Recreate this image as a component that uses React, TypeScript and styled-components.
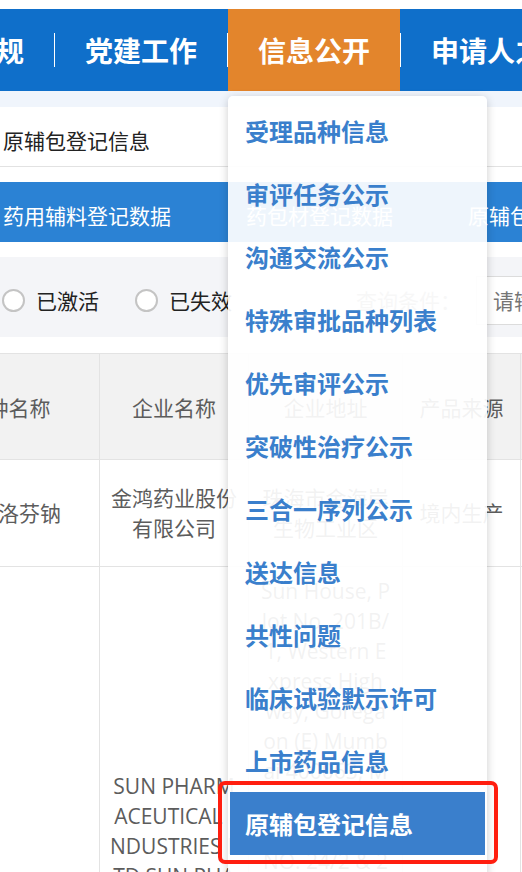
import React from "react"
import styled, { createGlobalStyle, css } from "styled-components"

const GlobalStyle = createGlobalStyle`
  html, body {
    margin: 0;
    padding: 0;
    background: #fff;
  }
  body {
    font-family: "Open Sans", "Noto Sans CJK SC", sans-serif;
    overflow: hidden;
  }
  * {
    box-sizing: border-box;
  }
`

const navItems = ["政策法规", "党建工作", "信息公开", "申请人之窗", "专题专栏"]

const menuItems = [
  "受理品种信息",
  "审评任务公示",
  "沟通交流公示",
  "特殊审批品种列表",
  "优先审评公示",
  "突破性治疗公示",
  "三合一序列公示",
  "送达信息",
  "共性问题",
  "临床试验默示许可",
  "上市药品信息",
  "原辅包登记信息",
]

const tabs = ["药用辅料登记数据", "药包材登记数据", "原辅包登记数据"]

// long cell text, broken the way the table shows it
const companyLines = [
  "SUN PHARM",
  "ACEUTICAL I",
  "NDUSTRIES L",
  "TD SUN PHA",
  "RMACEUTIC",
  "AL INDUSTRI",
  "ES LTD (HAL",
  "OL UNIT)",
  "LIMITED",
]
const addressLines = [
  "Sun House, P",
  "lot No. 201B/",
  "1, Western E",
  "xpress High",
  "way, Gorega",
  "on (E) Mumb",
  "ai 400063, M",
  "aharashtra, I",
  "NDIA;PLOT",
  "NO. 24/2 & 2",
  "5, GIDC, PH",
  "ASE-IV, PAN",
  "OLI, DIST. V",
  "ADODARA-39",
  "1 350, GUJA",
  "RAT, INDIA;",
  "SURVEY NO.",
  "259/15, DAD",
  "RA, SILVASS",
  "A, DADRA &",
  "NAGAR HAV",
  "ELI, INDIA",
]

export default function App() {
  return (
    <>
      <GlobalStyle />
      <Page>
        <Nav>
          {navItems.map((item, i) => (
            <React.Fragment key={item}>
              <NavItem $active={item === "信息公开"}>
                {item}
                {item === "信息公开" && (
                  <Dropdown>
                    {menuItems.map((m) => (
                      <MenuItem key={m} $active={m === "原辅包登记信息"}>
                        {m}
                      </MenuItem>
                    ))}
                  </Dropdown>
                )}
              </NavItem>
              {i < navItems.length - 1 && <NavDivider />}
            </React.Fragment>
          ))}
        </Nav>
        <Band />
        <Crumb>原辅包登记信息</Crumb>
        <Tabs>
          {tabs.map((t) => (
            <Tab key={t}>{t}</Tab>
          ))}
        </Tabs>
        <Filter>
          <Radio>
            <Circle />
            已激活
          </Radio>
          <Radio>
            <Circle />
            已失效
          </Radio>
          <QueryLabel>查询条件：</QueryLabel>
          <Input>请输入关键字</Input>
        </Filter>
        <Table>
          <colgroup>
            <col style={{ width: 182 }} />
            <col style={{ width: 149 }} />
            <col style={{ width: 154 }} />
            <col style={{ width: 118 }} />
            <col style={{ width: 120 }} />
          </colgroup>
          <thead>
            <tr>
              <Th>品种名称</Th>
              <Th>企业名称</Th>
              <Th>企业地址</Th>
              <Th>产品来源</Th>
              <Th>登记状态</Th>
            </tr>
          </thead>
          <tbody>
            <tr>
              <Td $tall>洛索洛芬钠</Td>
              <Td $tall>
                金鸿药业股份
                <br />
                有限公司
              </Td>
              <Td $tall>
                珠海市金海岸
                <br />
                生物工业区
              </Td>
              <Td $tall>境内生产</Td>
              <Td $tall>A</Td>
            </tr>
            <tr>
              <Td>瑞舒伐他汀钙</Td>
              <Td>
                {companyLines.map((l) => (
                  <Line key={l}>{l}</Line>
                ))}
              </Td>
              <Td>
                {addressLines.map((l) => (
                  <Line key={l}>{l}</Line>
                ))}
              </Td>
              <Td>境外生产</Td>
              <Td>A</Td>
            </tr>
          </tbody>
        </Table>
      </Page>
    </>
  )
}

const Page = styled.div`
  width: 522px;
  padding-top: 9px;
`

const Nav = styled.nav`
  display: flex;
  align-items: center;
  height: 82px;
  margin-left: -118px;
  background: #0f6fca;
`

const NavItem = styled.div<{ $active?: boolean }>`
  position: relative;
  flex-shrink: 0;
  height: 100%;
  display: flex;
  align-items: center;
  padding: 0 30px;
  font-size: 28px;
  font-weight: 700;
  color: #fff;
  white-space: nowrap;
  background: ${(p) => (p.$active ? "#e3852c" : "transparent")};
`

const NavDivider = styled.span`
  flex-shrink: 0;
  width: 1px;
  height: 34px;
  background: #fff;
`

const Dropdown = styled.div`
  position: absolute;
  top: calc(100% + 5px);
  left: 0;
  width: 259px;
  padding: 3px 2px 24px;
  background: rgba(255, 255, 255, 0.92);
  border-radius: 5px;
  box-shadow: 0 2px 10px rgba(0, 0, 0, 0.2);
  z-index: 10;
`

const MenuItem = styled.div<{ $active?: boolean }>`
  position: relative;
  height: 63px;
  display: flex;
  align-items: center;
  padding-left: 15px;
  font-size: 24px;
  font-weight: 700;
  color: ${(p) => (p.$active ? "#fff" : "#3a7fcc")};
  background: ${(p) => (p.$active ? "#3a7fcc" : "transparent")};

  ${(p) =>
    p.$active &&
    css`
      &::after {
        content: "";
        position: absolute;
        top: -11px;
        bottom: -9px;
        left: -12px;
        right: -13px;
        border: 4px solid #ff1e0f;
        border-radius: 7px;
      }
    `}
`

const Band = styled.div`
  height: 16px;
  background: #f0f5fc;
`

const Crumb = styled.div`
  height: 60px;
  display: flex;
  align-items: center;
  padding: 7px 0 0 3px;
  font-size: 21px;
  color: #222;
  border-bottom: 1px solid #e2e2e2;
`

const Tabs = styled.div`
  margin-top: 15px;
  height: 60px;
  display: flex;
  align-items: center;
  gap: 75px;
  padding: 5px 0 0 3px;
  background: #2b82d4;
  white-space: nowrap;
`

const Tab = styled.div`
  flex-shrink: 0;
  font-size: 21px;
  color: #fff;
`

const Filter = styled.div`
  margin-top: 15px;
  height: 80px;
  display: flex;
  align-items: center;
  padding: 6px 0 0 2px;
  background: #f4f5f8;
  font-size: 21px;
  color: #222;
  white-space: nowrap;
`

const Radio = styled.label`
  flex-shrink: 0;
  display: flex;
  align-items: center;
  gap: 11px;
  margin-right: 36px;
`

const Circle = styled.span`
  width: 23px;
  height: 23px;
  border-radius: 50%;
  border: 2px solid #c4c4c4;
  background: #fff;
`

const QueryLabel = styled.span`
  flex-shrink: 0;
  margin-left: 88px;
  color: #999;
`

const Input = styled.div`
  flex-shrink: 0;
  width: 220px;
  height: 49px;
  margin-left: 15px;
  display: flex;
  align-items: center;
  padding-left: 16px;
  background: #fff;
  border: 1px solid #dcdcdc;
  color: #757575;
`

const Table = styled.table`
  margin-top: 16px;
  margin-left: -83px;
  width: 723px;
  border-collapse: collapse;
  table-layout: fixed;
  font-size: 21px;
  color: #5c5c5c;
`

const Th = styled.th`
  height: 106px;
  background: #f2f2f2;
  font-weight: 400;
  text-align: center;
  border: 1px solid #e3e3e3;
`

const Td = styled.td<{ $tall?: boolean }>`
  ${(p) => p.$tall && "height: 107px;"}
  padding: 9px 10px;
  text-align: center;
  vertical-align: middle;
  line-height: 30px;
  border: 1px solid #e3e3e3;
`

const Line = styled.div`
  white-space: nowrap;
`
